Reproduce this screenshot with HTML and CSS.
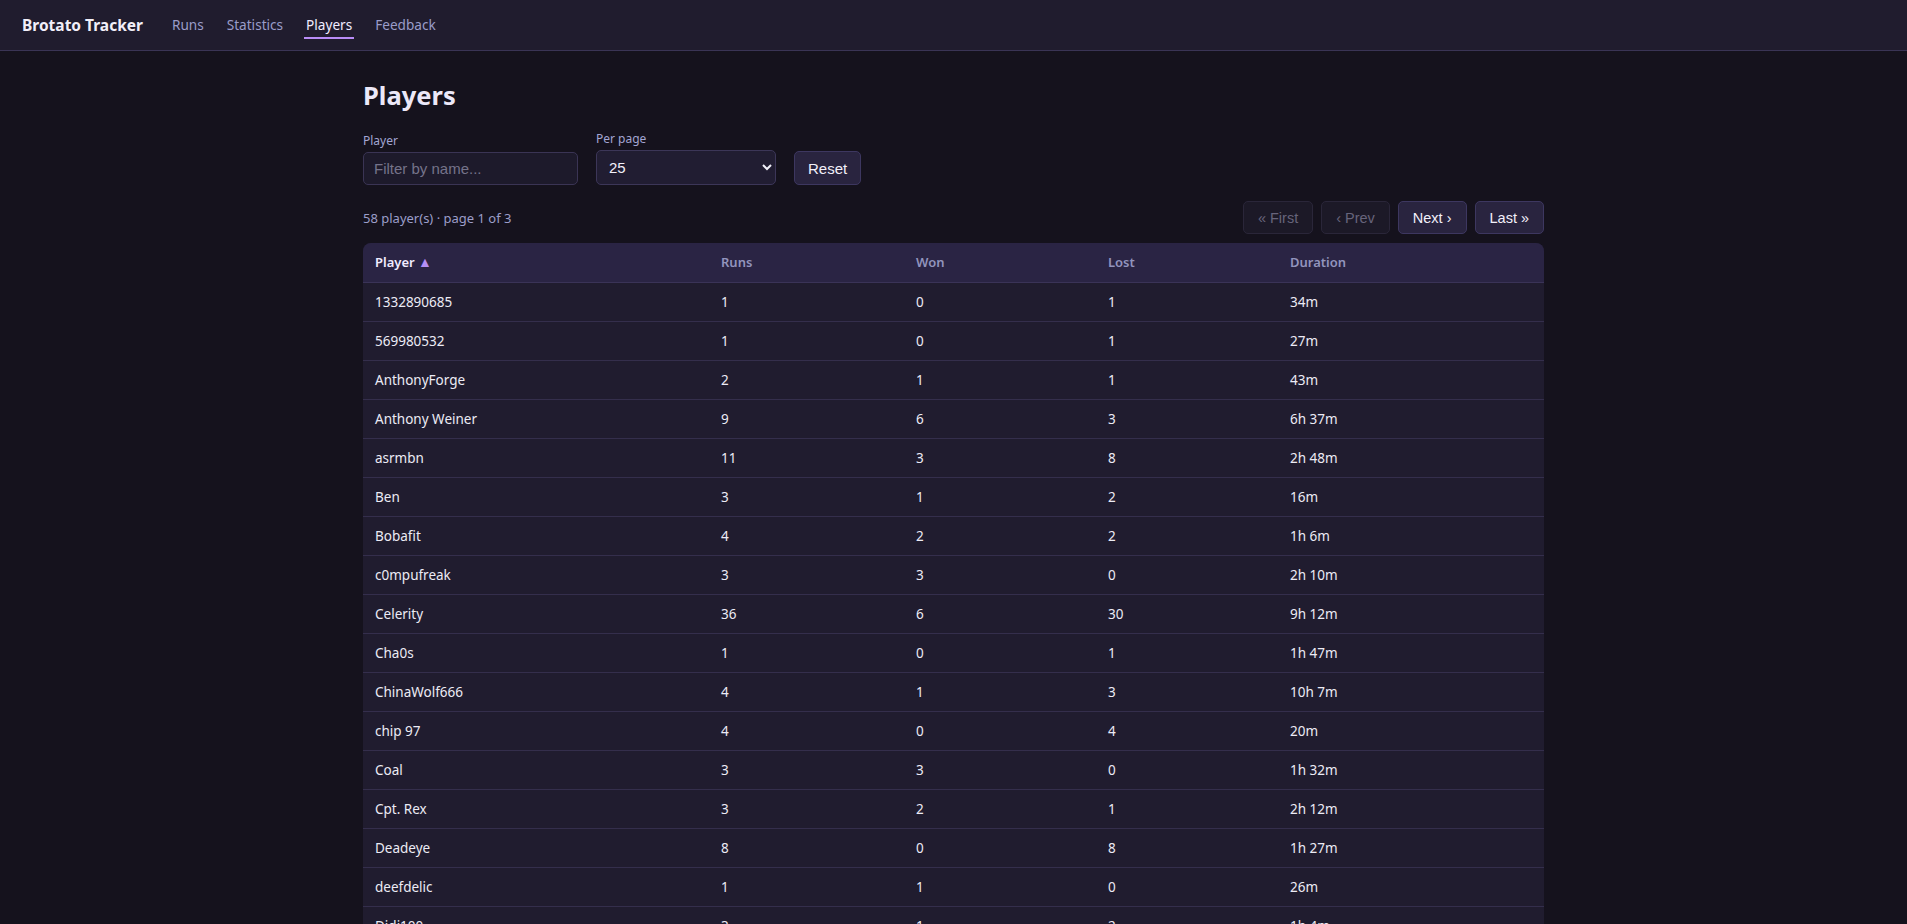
FILE: index.html
```html
<!DOCTYPE html>
<html lang="en">
<head>
<meta charset="utf-8">
<title>Players - Brotato Tracker</title>
<link rel="stylesheet" href="styles.css">
</head>
<body>
<header class="topbar">
  <a class="brand" href="#">Brotato Tracker</a>
  <nav class="nav">
    <a class="nav-link" href="#">Runs</a>
    <a class="nav-link" href="#">Statistics</a>
    <a class="nav-link active" href="#">Players</a>
    <a class="nav-link" href="#">Feedback</a>
  </nav>
</header>
<main class="container">
  <h1 class="page-title">Players</h1>
  <div class="filters">
    <label class="field">
      <span class="field-label">Player</span>
      <input class="text-input" type="text" placeholder="Filter by name...">
    </label>
    <label class="field">
      <span class="field-label">Per page</span>
      <select class="select-input">
        <option>10</option>
        <option selected>25</option>
        <option>50</option>
        <option>100</option>
      </select>
    </label>
    <button class="btn btn-reset" type="button">Reset</button>
  </div>
  <div class="status-row">
    <span class="status">58 player(s) · page 1 of 3</span>
    <div class="pager">
      <button class="btn btn-page" type="button" disabled>« First</button>
      <button class="btn btn-page" type="button" disabled>‹ Prev</button>
      <button class="btn btn-page" type="button">Next ›</button>
      <button class="btn btn-page" type="button">Last »</button>
    </div>
  </div>
  <div class="table-wrap">
    <table class="players">
      <colgroup>
        <col class="c-player"><col class="c-runs"><col class="c-won"><col class="c-lost"><col class="c-dur">
      </colgroup>
      <thead>
        <tr>
          <th class="sorted">Player <span class="sort-arrow">▲</span></th>
          <th>Runs</th>
          <th>Won</th>
          <th>Lost</th>
          <th>Duration</th>
        </tr>
      </thead>
      <tbody>
        <tr><td>1332890685</td><td>1</td><td>0</td><td>1</td><td>34m</td></tr>
        <tr><td>569980532</td><td>1</td><td>0</td><td>1</td><td>27m</td></tr>
        <tr><td>AnthonyForge</td><td>2</td><td>1</td><td>1</td><td>43m</td></tr>
        <tr><td>Anthony Weiner</td><td>9</td><td>6</td><td>3</td><td>6h 37m</td></tr>
        <tr><td>asrmbn</td><td>11</td><td>3</td><td>8</td><td>2h 48m</td></tr>
        <tr><td>Ben</td><td>3</td><td>1</td><td>2</td><td>16m</td></tr>
        <tr><td>Bobafit</td><td>4</td><td>2</td><td>2</td><td>1h 6m</td></tr>
        <tr><td>c0mpufreak</td><td>3</td><td>3</td><td>0</td><td>2h 10m</td></tr>
        <tr><td>Celerity</td><td>36</td><td>6</td><td>30</td><td>9h 12m</td></tr>
        <tr><td>Cha0s</td><td>1</td><td>0</td><td>1</td><td>1h 47m</td></tr>
        <tr><td>ChinaWolf666</td><td>4</td><td>1</td><td>3</td><td>10h 7m</td></tr>
        <tr><td>chip 97</td><td>4</td><td>0</td><td>4</td><td>20m</td></tr>
        <tr><td>Coal</td><td>3</td><td>3</td><td>0</td><td>1h 32m</td></tr>
        <tr><td>Cpt. Rex</td><td>3</td><td>2</td><td>1</td><td>2h 12m</td></tr>
        <tr><td>Deadeye</td><td>8</td><td>0</td><td>8</td><td>1h 27m</td></tr>
        <tr><td>deefdelic</td><td>1</td><td>1</td><td>0</td><td>26m</td></tr>
        <tr><td>Didi100</td><td>3</td><td>1</td><td>2</td><td>1h 4m</td></tr>
        <tr><td>Dreadnought</td><td>2</td><td>0</td><td>2</td><td>31m</td></tr>
        <tr><td>Eggman</td><td>5</td><td>2</td><td>3</td><td>1h 58m</td></tr>
        <tr><td>Faelan</td><td>1</td><td>1</td><td>0</td><td>29m</td></tr>
        <tr><td>Fizz</td><td>6</td><td>1</td><td>5</td><td>2h 3m</td></tr>
        <tr><td>Gargoyle</td><td>2</td><td>0</td><td>2</td><td>22m</td></tr>
        <tr><td>Ghost</td><td>7</td><td>4</td><td>3</td><td>3h 41m</td></tr>
        <tr><td>Hexa</td><td>1</td><td>0</td><td>1</td><td>12m</td></tr>
        <tr><td>Ironclad</td><td>3</td><td>1</td><td>2</td><td>58m</td></tr>
      </tbody>
    </table>
  </div>
</main>
</body>
</html>
```
FILE: styles.css
```css
* { box-sizing: border-box; }

html, body {
  margin: 0;
  padding: 0;
}

body {
  background: #15121d;
  color: #ecebf5;
  font-family: "Noto Sans", "Open Sans", sans-serif;
  font-size: 14px;
}

a { text-decoration: none; }

.topbar {
  display: flex;
  align-items: center;
  height: 51px;
  padding: 0 22px;
  background: #201c2e;
  border-bottom: 1px solid #3a3455;
}

.brand {
  color: #f2eff9;
  font-weight: 700;
  font-size: 15.5px;
  margin-right: 27px;
}

.nav {
  display: flex;
  gap: 19px;
  height: 100%;
}

.nav-link {
  display: flex;
  align-items: center;
  padding: 0 2px 1px;
  color: #9a9cc9;
  font-size: 13.6px;
  position: relative;
}

.nav-link.active {
  color: #f1ecff;
}

.nav-link.active::after {
  content: "";
  position: absolute;
  left: 0;
  right: 0;
  top: 37px;
  height: 2px;
  background: #b98cf7;
}

.container {
  max-width: 1181px;
  margin: 0 auto;
  padding-top: 27px;
}

.page-title {
  margin: 0;
  font-size: 25.5px;
  line-height: 34px;
  font-weight: 700;
  color: #ece8f8;
}

.filters {
  display: flex;
  align-items: flex-end;
  gap: 18px;
  margin-top: 19px;
}

.field {
  display: flex;
  flex-direction: column;
  gap: 3px;
}

.field-label {
  font-size: 12px;
  line-height: 16px;
  color: #a3a6d3;
}

.text-input {
  width: 215px;
  height: 33px;
  padding: 0 10px;
  background: #1d1a2b;
  border: 1px solid #3a3454;
  border-radius: 5px;
  color: #ecebf5;
  font-family: "Liberation Sans", Arial, sans-serif;
  font-size: 15px;
}

.text-input::placeholder {
  color: #75738a;
}

.select-input {
  width: 180px;
  height: 35px;
  padding: 0 8px;
  background: #211d32;
  border: 1px solid #3c3658;
  border-radius: 5px;
  color: #f2f0fa;
  font-family: "Liberation Sans", Arial, sans-serif;
  font-size: 15px;
}

.btn {
  font-family: "Liberation Sans", Arial, sans-serif;
  background: #29243f;
  color: #f2f0fa;
  border: 1px solid #3d3760;
  border-radius: 5px;
  cursor: pointer;
}

.btn-reset {
  height: 34px;
  padding: 0 13px;
  font-size: 15px;
}

.status-row {
  display: flex;
  align-items: center;
  justify-content: space-between;
  margin-top: 16px;
}

.status {
  font-size: 13px;
  color: #9c9ec9;
}

.pager {
  display: flex;
  gap: 8px;
}

.btn-page {
  height: 33px;
  padding: 0 14px;
  font-size: 14.5px;
}

.btn-page:disabled {
  background: #1c1927;
  color: #67647b;
  border-color: #2a2639;
  cursor: default;
}

.table-wrap {
  margin-top: 9px;
  border-radius: 8px;
  overflow: hidden;
  background: #201c2f;
}

.players {
  width: 100%;
  border-collapse: collapse;
  table-layout: fixed;
}

.c-player { width: 346px; }
.c-runs { width: 195px; }
.c-won { width: 192px; }
.c-lost { width: 182px; }
.c-dur { width: 266px; }

.players th {
  height: 39px;
  padding: 0 12px;
  text-align: left;
  font-size: 13px;
  font-weight: 600;
  color: #9294bd;
  background: #2a2444;
  border-bottom: 1px solid #3a3357;
}

.players th.sorted {
  color: #f0ecff;
}

.sort-arrow {
  color: #b48ff5;
  font-size: 14px;
  line-height: 1;
}

.players td {
  height: 39px;
  padding: 0 12px;
  font-size: 13.5px;
  color: #ecebf5;
  border-bottom: 1px solid #342e4c;
}
```
